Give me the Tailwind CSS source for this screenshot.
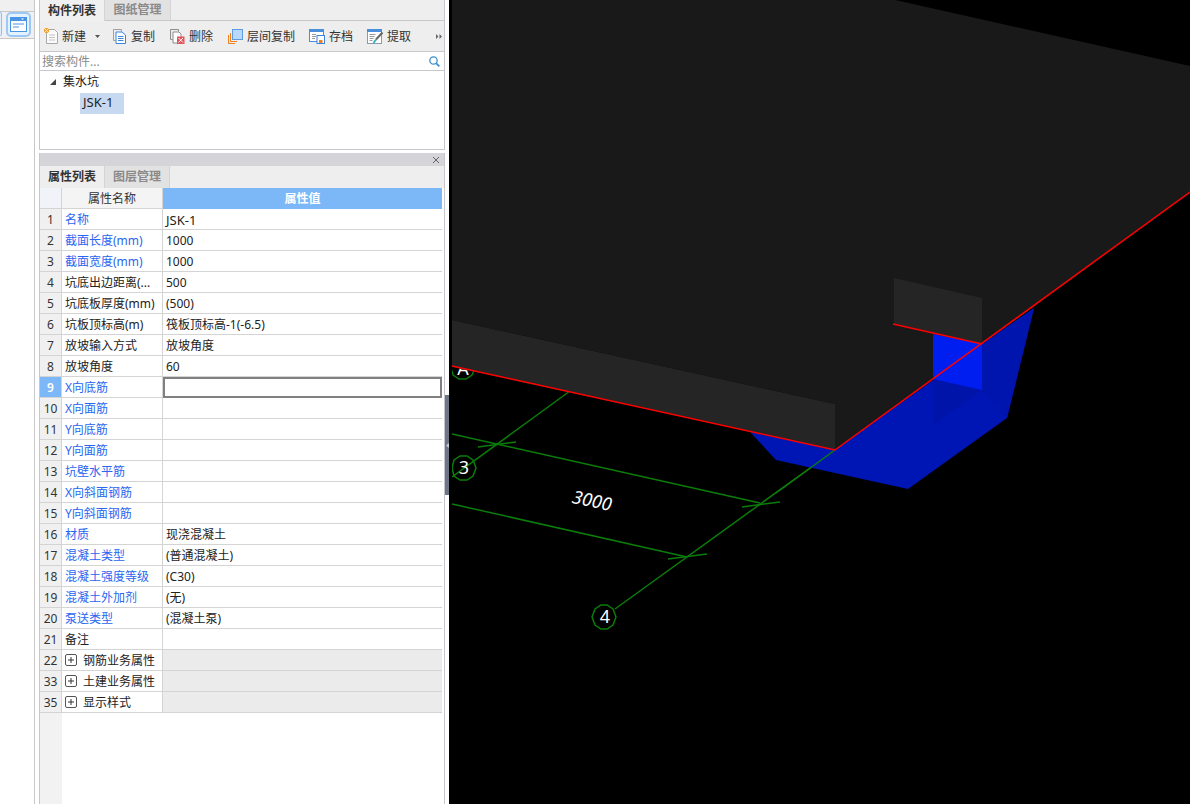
<!DOCTYPE html>
<html lang="zh-CN">
  <head>
    <meta charset="UTF-8" />
    <title>构件列表</title>
    <script src="https://cdn.jsdelivr.net/npm/@tailwindcss/browser@4"></script>
  </head>
  <body class="bg-white overflow-hidden">
    <div class="flex w-[1190px] h-[804px] text-[12px] leading-[20px] text-[#222] font-['Noto_Sans','Noto_Sans_CJK_SC',sans-serif]">
      <!-- left strip -->
      <div class="w-[35px] shrink-0 border-r border-[#c8c8c8] flex flex-col">
        <div class="h-[12px] bg-[#f0f0f0] border-b border-[#c8c8c8]"></div>
        <div class="h-[27px] bg-[#f0f0f0] border-b border-[#c8c8c8] flex items-start gap-[4px]">
          <div class="w-[2px] h-[24px] bg-[#dceeff] border border-l-0 border-[#8fc0f5] rounded-r-[3px]"></div>
          <div class="w-[25px] h-[25px] bg-[#e4f1ff] border-2 border-[#9cc8f5] rounded-[5px] flex items-center justify-center">
            <svg width="17" height="15" viewBox="0 0 17 15">
              <rect x="0" y="0" width="17" height="15" fill="#fff" />
              <rect x="0" y="0" width="17" height="4" fill="#4a94e6" />
              <rect x="0" y="0" width="1" height="15" fill="#4a94e6" />
              <rect x="16" y="0" width="1" height="15" fill="#4a94e6" />
              <rect x="0" y="14" width="17" height="1" fill="#4a94e6" />
              <path d="M3 7h11M3 10h6" stroke="#4a94e6" />
              <path d="M11 1.500h3l-1.500 1.500z" fill="#fff" />
            </svg>
          </div>
        </div>
      </div>

      <div class="w-[4px] shrink-0"></div>

      <!-- property panels -->
      <div class="w-[406px] shrink-0 flex flex-col">
        <div class="h-[150px] border border-t-0 border-[#c6c6cc] flex flex-col">
          <div class="h-[21px] bg-[#eeeeee] border-b border-[#c8c8c8] flex">
            <div class="w-[65px] h-[21px] bg-[#f0f0f0] border-r border-[#d4d4d4] font-semibold text-[#333] flex items-center justify-center">构件列表</div>
            <div class="w-[66px] h-[20px] bg-[#e2e2e2] border-r border-[#d4d4d4] font-semibold text-[#8a8a8a] flex items-center justify-center">图纸管理</div>
          </div>
          <div class="h-[31px] bg-[#eeeeee] border-b border-[#c8c8cc] flex items-center pl-[4px] text-[#333]">
            <svg class="w-[15px] h-[17px] shrink-0" viewBox="0 0 15 17">
              <path d="M2.500 1.500h8l3 3v11h-11z" fill="#fafafa" stroke="#a8a8a8" />
              <path d="M5 7h6M5 9.500h6M5 12h6" stroke="#c4c4c4" />
              <rect x="0" y="0" width="5" height="5" fill="#f2a33c" />
              <path d="M0 0l5 5M5 0l-5 5" stroke="#ffe6b8" />
            </svg>
            <span class="ml-[3px] w-[25px] mt-[2px]">新建</span>
            <svg class="ml-[8px] w-[5px] h-[3px]" viewBox="0 0 5 3"><path d="M0 0h5l-2.500 3z" fill="#555" /></svg>
            <svg class="ml-[13px] w-[13px] h-[15px] shrink-0" viewBox="0 0 13 15">
              <path d="M.5.500h8v2" fill="none" stroke="#a0a0a0" />
              <path d="M.5.500v11h2" fill="none" stroke="#a0a0a0" />
              <path d="M3 3h6l3.500 3v8.500H3z" fill="#fff" stroke="#3b84dc" />
              <path d="M5 7.500h5.500M5 9.500h5.500M5 11.500h5.500" stroke="#3b84dc" />
            </svg>
            <span class="ml-[5px] w-[24px] mt-[2px]">复制</span>
            <svg class="ml-[15px] w-[15px] h-[15px] shrink-0" viewBox="0 0 15 15">
              <path d="M.5.500h8v2" fill="none" stroke="#8c8c8c" />
              <path d="M.5.500v10h2" fill="none" stroke="#8c8c8c" />
              <path d="M3 3h6l2 2v9H3z" fill="#fff" stroke="#8c8c8c" />
              <rect x="7" y="7.500" width="7.500" height="7.500" fill="#e0555a" />
              <path d="M8.500 9l4.500 4.500M13 9l-4.500 4.500" stroke="#fff" />
            </svg>
            <span class="ml-[4px] w-[24px] mt-[2px]">删除</span>
            <svg class="ml-[15px] w-[15px] h-[15px] shrink-0" viewBox="0 0 15 15">
              <path d="M.5 6v8.500H7" fill="none" stroke="#f08020" />
              <path d="M2.500 4v8.500H9" fill="none" stroke="#f08020" />
              <rect x="4.500" y=".5" width="10" height="10" fill="#b9d8fb" stroke="#5c9ce4" />
            </svg>
            <span class="ml-[4px] w-[48px] mt-[2px]">层间复制</span>
            <svg class="ml-[14px] w-[16px] h-[15px] shrink-0" viewBox="0 0 16 15">
              <rect x=".5" y=".5" width="14" height="12" fill="#fff" stroke="#4a8fdc" />
              <rect x="0" y="0" width="15" height="3" fill="#4a8fdc" />
              <path d="M3 5.500h4M3 7.500h4M3 9.500h3" stroke="#9a9a9a" />
              <rect x="8" y="6.500" width="7.500" height="8" fill="#fff" stroke="#3b84dc" />
              <rect x="10" y="11" width="3.500" height="3" fill="#f08020" />
            </svg>
            <span class="ml-[4px] w-[24px] mt-[2px]">存档</span>
            <svg class="ml-[14px] w-[16px] h-[15px] shrink-0" viewBox="0 0 16 15">
              <rect x=".5" y=".5" width="14" height="14" fill="#fff" stroke="#8c9ab0" />
              <rect x="0" y="0" width="15" height="3" fill="#4a8fdc" />
              <path d="M2.500 5.500h6M2.500 7.500h5M2.500 9.500h4M2.500 11.500h3" stroke="#9a9a9a" />
              <path d="M15.500 3.500l-6.500 7" stroke="#666" stroke-width="2" />
              <path d="M9 10.500l-2.500 3.500" stroke="#35b0c8" stroke-width="2" />
            </svg>
            <span class="ml-[4px] w-[24px] mt-[2px]">提取</span>
            <svg class="ml-[25px] w-[6px] h-[5px]" viewBox="0 0 6 5"><path d="M0 0l2.500 2.500L0 5zM3.500 0L6 2.500 3.500 5z" fill="#666" /></svg>
          </div>
          <div class="h-[19px] border-b border-[#c8c8cc] flex items-center pl-[2px] pr-[4px] justify-between text-[#8a8a8a]">
            <span class="pt-[2px] leading-[18px]">搜索构件...</span>
            <svg class="w-[11px] h-[11px]" viewBox="0 0 11 11">
              <circle cx="4.500" cy="4.500" r="3.700" fill="none" stroke="#3d8fcb" stroke-width="1.300" />
              <path d="M7.300 7.300l3 3" stroke="#3d8fcb" stroke-width="1.800" />
            </svg>
          </div>
          <div class="flex-1 pt-[1px]">
            <div class="flex items-center h-[20px] pl-[10px]">
              <svg class="w-[6px] h-[6px]" viewBox="0 0 6 6"><path d="M6 0v6H0z" fill="#444" /></svg>
              <span class="ml-[7px] text-[#222]">集水坑</span>
            </div>
            <div class="ml-[40px] mt-[1px] w-[44px] h-[21px] bg-[#c6d9f0] pl-[3px] pb-[3px] flex items-center text-[#222] text-[13px]">JSK-1</div>
          </div>
        </div>

        <div class="h-[3px]"></div>

        <div class="flex-1 border-r border-[#c6c6cc] border-l flex flex-col">
          <div class="h-[13px] bg-[#d4d4d9] flex items-center justify-end pr-[5px]">
            <svg class="w-[6px] h-[6px]" viewBox="0 0 6 6"><path d="M0 0l6 6M6 0L0 6" stroke="#666" /></svg>
          </div>
          <div class="h-[22px] bg-[#eeeeee] flex">
            <div class="w-[65px] bg-[#eeeeee] border-r border-[#d4d4d4] font-semibold text-[#333] flex items-center justify-center">属性列表</div>
            <div class="w-[65px] bg-[#e2e2e2] border-r border-[#d4d4d4] font-semibold text-[#8a8a8a] flex items-center justify-center">图层管理</div>
          </div>

          <div class="flex-1 w-[402px] bg-[linear-gradient(to_right,#f2f2f2_22px,#ffffff_22px)] leading-[22px]">
            <div class="grid grid-cols-[22px_101px_279px] grid-rows-[21px] h-[21px]">
              <div class="bg-[#f0f3f7] border-r border-b border-[#d4d4d4]"></div>
              <div class="bg-[#f4f4f4] border-r border-b border-[#d4d4d4] text-center text-[#333]">属性名称</div>
              <div class="bg-[#7cb8f7] text-center font-semibold text-white">属性值</div>
            </div>

            <div class="grid grid-cols-[22px_101px_279px] grid-rows-[20px] h-[21px] border-b border-[#d4d4d4]"><div class="bg-[#f0f0f0] border-r border-[#d4d4d4] text-center text-[#333]">1</div><div class="border-r border-[#d4d4d4] pl-[3px] text-[#2a66f0]">名称</div><div class="pl-[3px] text-[13px]">JSK-1</div></div>
            <div class="grid grid-cols-[22px_101px_279px] grid-rows-[20px] h-[21px] border-b border-[#d4d4d4]"><div class="bg-[#f0f0f0] border-r border-[#d4d4d4] text-center text-[#333]">2</div><div class="border-r border-[#d4d4d4] pl-[3px] text-[#2a66f0]">截面长度(mm)</div><div class="pl-[3px]">1000</div></div>
            <div class="grid grid-cols-[22px_101px_279px] grid-rows-[20px] h-[21px] border-b border-[#d4d4d4]"><div class="bg-[#f0f0f0] border-r border-[#d4d4d4] text-center text-[#333]">3</div><div class="border-r border-[#d4d4d4] pl-[3px] text-[#2a66f0]">截面宽度(mm)</div><div class="pl-[3px]">1000</div></div>
            <div class="grid grid-cols-[22px_101px_279px] grid-rows-[20px] h-[21px] border-b border-[#d4d4d4]"><div class="bg-[#f0f0f0] border-r border-[#d4d4d4] text-center text-[#333]">4</div><div class="border-r border-[#d4d4d4] pl-[3px] whitespace-nowrap">坑底出边距离(...</div><div class="pl-[3px]">500</div></div>
            <div class="grid grid-cols-[22px_101px_279px] grid-rows-[20px] h-[21px] border-b border-[#d4d4d4]"><div class="bg-[#f0f0f0] border-r border-[#d4d4d4] text-center text-[#333]">5</div><div class="border-r border-[#d4d4d4] pl-[3px] whitespace-nowrap">坑底板厚度(mm)</div><div class="pl-[3px]">(500)</div></div>
            <div class="grid grid-cols-[22px_101px_279px] grid-rows-[20px] h-[21px] border-b border-[#d4d4d4]"><div class="bg-[#f0f0f0] border-r border-[#d4d4d4] text-center text-[#333]">6</div><div class="border-r border-[#d4d4d4] pl-[3px]">坑板顶标高(m)</div><div class="pl-[3px]">筏板顶标高-1(-6.5)</div></div>
            <div class="grid grid-cols-[22px_101px_279px] grid-rows-[20px] h-[21px] border-b border-[#d4d4d4]"><div class="bg-[#f0f0f0] border-r border-[#d4d4d4] text-center text-[#333]">7</div><div class="border-r border-[#d4d4d4] pl-[3px]">放坡输入方式</div><div class="pl-[3px]">放坡角度</div></div>
            <div class="grid grid-cols-[22px_101px_279px] grid-rows-[20px] h-[21px] border-b border-[#d4d4d4]"><div class="bg-[#f0f0f0] border-r border-[#d4d4d4] text-center text-[#333]">8</div><div class="border-r border-[#d4d4d4] pl-[3px]">放坡角度</div><div class="pl-[3px]">60</div></div>
            <div class="grid grid-cols-[22px_101px_279px] grid-rows-[20px] h-[21px] border-b border-[#d4d4d4]"><div class="bg-[#7cb8f7] border-r border-[#d4d4d4] text-center font-semibold text-white">9</div><div class="border-r border-[#d4d4d4] pl-[3px] text-[#2a66f0]">X向底筋</div><div class="border-2 border-[#808080] h-[21px]"></div></div>
            <div class="grid grid-cols-[22px_101px_279px] grid-rows-[20px] h-[21px] border-b border-[#d4d4d4]"><div class="bg-[#f0f0f0] border-r border-[#d4d4d4] text-center text-[#333]">10</div><div class="border-r border-[#d4d4d4] pl-[3px] text-[#2a66f0]">X向面筋</div><div></div></div>
            <div class="grid grid-cols-[22px_101px_279px] grid-rows-[20px] h-[21px] border-b border-[#d4d4d4]"><div class="bg-[#f0f0f0] border-r border-[#d4d4d4] text-center text-[#333]">11</div><div class="border-r border-[#d4d4d4] pl-[3px] text-[#2a66f0]">Y向底筋</div><div></div></div>
            <div class="grid grid-cols-[22px_101px_279px] grid-rows-[20px] h-[21px] border-b border-[#d4d4d4]"><div class="bg-[#f0f0f0] border-r border-[#d4d4d4] text-center text-[#333]">12</div><div class="border-r border-[#d4d4d4] pl-[3px] text-[#2a66f0]">Y向面筋</div><div></div></div>
            <div class="grid grid-cols-[22px_101px_279px] grid-rows-[20px] h-[21px] border-b border-[#d4d4d4]"><div class="bg-[#f0f0f0] border-r border-[#d4d4d4] text-center text-[#333]">13</div><div class="border-r border-[#d4d4d4] pl-[3px] text-[#2a66f0]">坑壁水平筋</div><div></div></div>
            <div class="grid grid-cols-[22px_101px_279px] grid-rows-[20px] h-[21px] border-b border-[#d4d4d4]"><div class="bg-[#f0f0f0] border-r border-[#d4d4d4] text-center text-[#333]">14</div><div class="border-r border-[#d4d4d4] pl-[3px] text-[#2a66f0]">X向斜面钢筋</div><div></div></div>
            <div class="grid grid-cols-[22px_101px_279px] grid-rows-[20px] h-[21px] border-b border-[#d4d4d4]"><div class="bg-[#f0f0f0] border-r border-[#d4d4d4] text-center text-[#333]">15</div><div class="border-r border-[#d4d4d4] pl-[3px] text-[#2a66f0]">Y向斜面钢筋</div><div></div></div>
            <div class="grid grid-cols-[22px_101px_279px] grid-rows-[20px] h-[21px] border-b border-[#d4d4d4]"><div class="bg-[#f0f0f0] border-r border-[#d4d4d4] text-center text-[#333]">16</div><div class="border-r border-[#d4d4d4] pl-[3px] text-[#2a66f0]">材质</div><div class="pl-[3px]">现浇混凝土</div></div>
            <div class="grid grid-cols-[22px_101px_279px] grid-rows-[20px] h-[21px] border-b border-[#d4d4d4]"><div class="bg-[#f0f0f0] border-r border-[#d4d4d4] text-center text-[#333]">17</div><div class="border-r border-[#d4d4d4] pl-[3px] text-[#2a66f0]">混凝土类型</div><div class="pl-[3px]">(普通混凝土)</div></div>
            <div class="grid grid-cols-[22px_101px_279px] grid-rows-[20px] h-[21px] border-b border-[#d4d4d4]"><div class="bg-[#f0f0f0] border-r border-[#d4d4d4] text-center text-[#333]">18</div><div class="border-r border-[#d4d4d4] pl-[3px] text-[#2a66f0]">混凝土强度等级</div><div class="pl-[3px]">(C30)</div></div>
            <div class="grid grid-cols-[22px_101px_279px] grid-rows-[20px] h-[21px] border-b border-[#d4d4d4]"><div class="bg-[#f0f0f0] border-r border-[#d4d4d4] text-center text-[#333]">19</div><div class="border-r border-[#d4d4d4] pl-[3px] text-[#2a66f0]">混凝土外加剂</div><div class="pl-[3px]">(无)</div></div>
            <div class="grid grid-cols-[22px_101px_279px] grid-rows-[20px] h-[21px] border-b border-[#d4d4d4]"><div class="bg-[#f0f0f0] border-r border-[#d4d4d4] text-center text-[#333]">20</div><div class="border-r border-[#d4d4d4] pl-[3px] text-[#2a66f0]">泵送类型</div><div class="pl-[3px]">(混凝土泵)</div></div>
            <div class="grid grid-cols-[22px_101px_279px] grid-rows-[20px] h-[21px] border-b border-[#d4d4d4]"><div class="bg-[#f0f0f0] border-r border-[#d4d4d4] text-center text-[#333]">21</div><div class="border-r border-[#d4d4d4] pl-[3px]">备注</div><div></div></div>
            <div class="grid grid-cols-[22px_101px_279px] grid-rows-[20px] h-[21px] border-b border-[#d4d4d4]"><div class="bg-[#f0f0f0] border-r border-[#d4d4d4] text-center text-[#333]">22</div><div class="border-r border-[#d4d4d4] pl-[3px] flex items-center bg-white"><span class="w-[12px] h-[12px] border border-[#555] rounded-[2px] flex items-center justify-center"><svg class="w-[6px] h-[6px]" viewBox="0 0 6 6"><path d="M3 0v6M0 3h6" stroke="#333" /></svg></span><span class="ml-[6px] mt-[2px] leading-[20px]">钢筋业务属性</span></div><div class="bg-[#ebebeb]"></div></div>
            <div class="grid grid-cols-[22px_101px_279px] grid-rows-[20px] h-[21px] border-b border-[#d4d4d4]"><div class="bg-[#f0f0f0] border-r border-[#d4d4d4] text-center text-[#333]">33</div><div class="border-r border-[#d4d4d4] pl-[3px] flex items-center bg-white"><span class="w-[12px] h-[12px] border border-[#555] rounded-[2px] flex items-center justify-center"><svg class="w-[6px] h-[6px]" viewBox="0 0 6 6"><path d="M3 0v6M0 3h6" stroke="#333" /></svg></span><span class="ml-[6px] mt-[2px] leading-[20px]">土建业务属性</span></div><div class="bg-[#ebebeb]"></div></div>
            <div class="grid grid-cols-[22px_101px_279px] grid-rows-[20px] h-[21px] border-b border-[#d4d4d4]"><div class="bg-[#f0f0f0] border-r border-[#d4d4d4] text-center text-[#333]">35</div><div class="border-r border-[#d4d4d4] pl-[3px] flex items-center bg-white"><span class="w-[12px] h-[12px] border border-[#555] rounded-[2px] flex items-center justify-center"><svg class="w-[6px] h-[6px]" viewBox="0 0 6 6"><path d="M3 0v6M0 3h6" stroke="#333" /></svg></span><span class="ml-[6px] mt-[2px] leading-[20px]">显示样式</span></div><div class="bg-[#ebebeb]"></div></div>
          </div>
        </div>
      </div>

      <!-- splitter -->
      <div class="w-[4px] shrink-0 flex items-start">
        <div class="w-[4px] h-[100px] mt-[395px] bg-[#6c7684] flex items-center justify-center">
          <svg class="w-[3px] h-[5px]" viewBox="0 0 3 5"><path d="M3 0v5L0 2.500z" fill="#c8ccd2" /></svg>
        </div>
      </div>

      <!-- 3d view -->
      <div class="flex-1 bg-black overflow-hidden">
        <svg width="741" height="804" viewBox="449 0 741 804" class="block">
          <defs>
            <clipPath id="view"><rect x="452" y="0" width="738" height="804" /></clipPath>
          </defs>
          <g clip-path="url(#view)">
            <!-- grid lines -->
            <g stroke="#0a7d0a" stroke-width="1.500" fill="none">
              <path d="M452 434L760 503" />
              <path d="M452 504L687 557" />
              <path d="M570 391L452 477" />
              <path d="M835 450L615 609" />
              <path d="M478 447L516 442M668 559L707 554M742 507L780 502" />
              <polygon points="475,368 472,375 466,379 459,379 453,375 451,368 453,361 459,357 466,357 472,361" />
              <polygon points="476,468 473,476 467,480 460,480 454,476 452,468 454,460 460,456 467,456 473,460" />
              <polygon points="616,617 613,625 607,629 601,629 595,625 592,617 595,609 601,605 607,605 613,609" />
            </g>
            <g fill="#fff" font-size="18" text-anchor="middle">
              <text x="463" y="375">A</text>
              <text x="464" y="474">3</text>
              <text x="605" y="623">4</text>
              <text x="592" y="507" font-style="italic" transform="rotate(12 592 501)">3000</text>
            </g>
            <!-- pit -->
            <polygon points="750,432 776,460 908,489 1007,418 1034,308 835,450" fill="#0016b4" />
            <polygon points="982,344 1034,308 1007,418 982,390" fill="#0014ae" />
            <polygon points="933,379 982,390 933,425" fill="#0014aa" />
            <polygon points="933,334 982,344 982,390 933,379" fill="#001ef0" />
            <path d="M835 450L776 493" stroke="#0a7d0a" stroke-width="1.500" />
            <!-- slab -->
            <polygon points="452,0 895,0 1190,66 1190,192 835,450 835,404 452,320" fill="#191919" />
            <polygon points="894,278 982,298 982,344 894,324" fill="#252525" />
            <polygon points="452,320 835,404 835,450 452,367" fill="#252525" />
            <polygon points="933,334 982,344 933,379" fill="#001ef0" />
            <path d="M452 366L835 450L1190 192M893 324L982 344" stroke="#ff0000" stroke-width="1.500" fill="none" />
          </g>
        </svg>
      </div>
    </div>
  </body>
</html>
